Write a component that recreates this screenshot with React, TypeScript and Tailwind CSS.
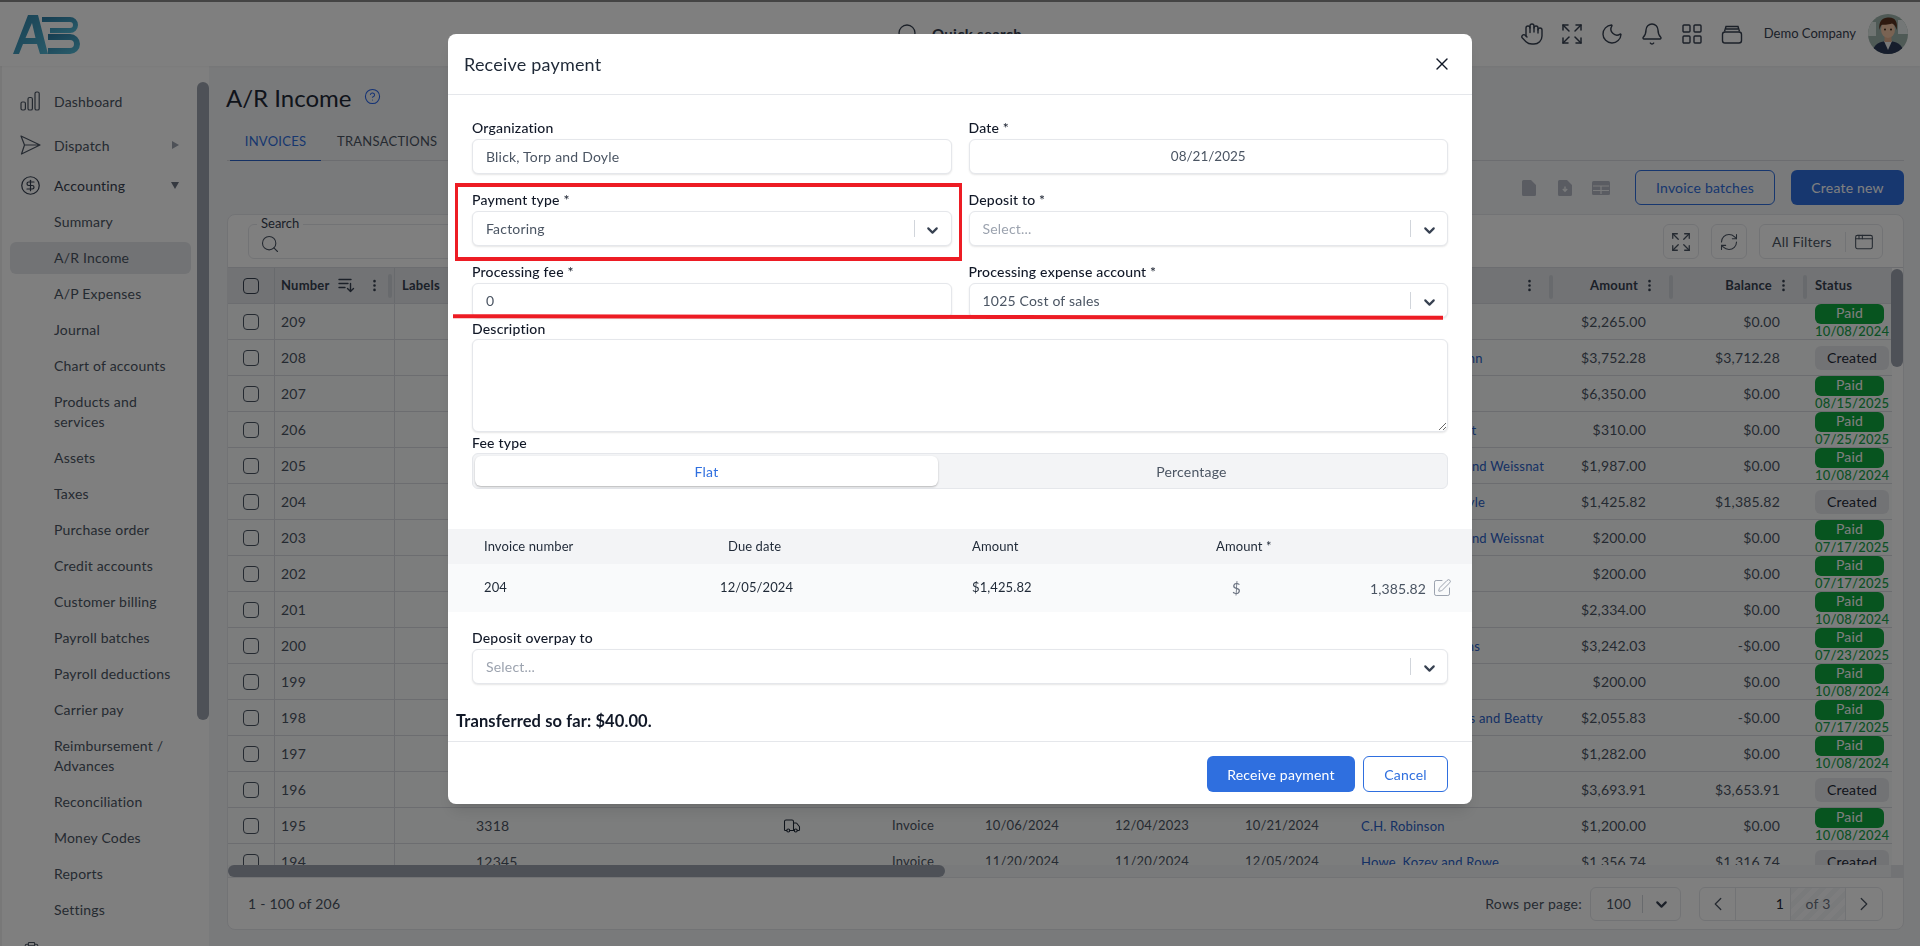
import React from "react";
import { Hand, Expand, Moon, Bell, LayoutGrid, CircleDollarSign, CircleHelp, Search, RefreshCw, ChevronDown, ChevronLeft, ChevronRight, X, EllipsisVertical, AppWindow, SquarePen, Truck, ClipboardList } from "lucide-react";

const sideTop = [
  { t: "Summary" }, { t: "A/R Income", active: true }, { t: "A/P Expenses" }, { t: "Journal" }, { t: "Chart of accounts" },
  { t: "Products and services", two: true }, { t: "Assets" }, { t: "Taxes" }, { t: "Purchase order" }, { t: "Credit accounts" },
  { t: "Customer billing" }, { t: "Payroll batches" }, { t: "Payroll deductions" }, { t: "Carrier pay" },
  { t: "Reimbursement / Advances", two: true }, { t: "Reconciliation" }, { t: "Money Codes" }, { t: "Reports" }, { t: "Settings" },
];

type Row = { n: string; load?: string; truck?: boolean; type?: string; d1?: string; d2?: string; d3?: string; cust?: string; amt: string; bal: string; paid?: string };
const rows: Row[] = [
  { n: "209", amt: "$2,265.00", bal: "$0.00", paid: "10/08/2024" },
  { n: "208", cust: "Daugherty-Hermann", amt: "$3,752.28", bal: "$3,712.28" },
  { n: "207", amt: "$6,350.00", bal: "$0.00", paid: "08/15/2025" },
  { n: "206", cust: "Bednar and Schmitt", amt: "$310.00", bal: "$0.00", paid: "07/25/2025" },
  { n: "205", cust: "Gleichner, Hagen and Weissnat", amt: "$1,987.00", bal: "$0.00", paid: "10/08/2024" },
  { n: "204", cust: "Blick, Torp and Doyle", amt: "$1,425.82", bal: "$1,385.82" },
  { n: "203", cust: "Gleichner, Hagen and Weissnat", amt: "$200.00", bal: "$0.00", paid: "07/17/2025" },
  { n: "202", cust: "Rempel and Kelley", amt: "$200.00", bal: "$0.00", paid: "07/17/2025" },
  { n: "201", cust: "Rempel and Kelley", amt: "$2,334.00", bal: "$0.00", paid: "10/08/2024" },
  { n: "200", cust: "Kshlerin and Simons", amt: "$3,242.03", bal: "-$0.00", paid: "07/23/2025" },
  { n: "199", amt: "$200.00", bal: "$0.00", paid: "10/08/2024" },
  { n: "198", cust: "Schroeder, Hopkins and Beatty", amt: "$2,055.83", bal: "-$0.00", paid: "07/17/2025" },
  { n: "197", amt: "$1,282.00", bal: "$0.00", paid: "10/08/2024" },
  { n: "196", amt: "$3,693.91", bal: "$3,653.91" },
  { n: "195", load: "3318", truck: true, type: "Invoice", d1: "10/06/2024", d2: "12/04/2023", d3: "10/21/2024", cust: "C.H. Robinson", amt: "$1,200.00", bal: "$0.00", paid: "10/08/2024" },
  { n: "194", load: "12345", type: "Invoice", d1: "11/20/2024", d2: "11/20/2024", d3: "12/05/2024", cust: "Howe, Kozey and Rowe", amt: "$1,356.74", bal: "$1,316.74" },
];

function Logo() {
  return (
    <svg width="68" height="41" viewBox="0 0 68 41" fill="none">
      <defs>
        <linearGradient id="lg" x1="0" y1="0" x2="1" y2="1">
          <stop offset="0" stopColor="#2f7fa6" />
          <stop offset="1" stopColor="#52b6d3" />
        </linearGradient>
      </defs>
      <path d="M1 40 L16 1 H26 L36 40 H28 L25 30 H11 L7 40 Z M13.500 24 H23.500 L20 9 Z" fill="url(#lg)" fillRule="evenodd" />
      <path d="M30 5.500 H58 A5.500 5.500 0 0 1 58 16.500 H38" stroke="url(#lg)" strokeWidth="5" />
      <path d="M36 23 H58 A7 7 0 0 1 58 37 H36" stroke="url(#lg)" strokeWidth="6" />
    </svg>
  );
}

function Avatar() {
  return (
    <svg width="40" height="40" viewBox="0 0 40 40" className="rounded-full">
      <rect width="40" height="40" fill="#9fb4ad" />
      <rect x="0" y="8" width="8" height="14" fill="#dfe8e4" />
      <rect x="30" y="6" width="10" height="14" fill="#e8eeee" />
      <path d="M4 40 C5 30 12 27 20 27 C28 27 35 30 36 40 Z" fill="#2c3a58" />
      <path d="M16 27 L20 36 L24 27 Z" fill="#f2f2f2" />
      <rect x="16.500" y="21" width="7" height="7" fill="#e4b08e" />
      <ellipse cx="20" cy="15.500" rx="7" ry="8.500" fill="#f2c6a6" />
      <path d="M11.500 16 C10 6 16 3 21 3.500 C28 3.500 30 9 28.500 16 C27.500 12 26 10 24 9.500 C20 11 15 10.500 13.500 11 C12.500 12 12 14 11.500 16 Z" fill="#5a3320" />
      <circle cx="17" cy="15.500" r="0.9" fill="#2a1a10" />
      <circle cx="23" cy="15.500" r="0.9" fill="#2a1a10" />
    </svg>
  );
}

function BarsIcon() {
  return (
    <svg width="20" height="20" viewBox="0 0 20 20" fill="none" stroke="currentColor" strokeWidth="1.2">
      <rect x="1" y="11" width="4.400" height="8" rx="1.400" />
      <rect x="8" y="6.500" width="4.400" height="12.500" rx="1.600" />
      <rect x="15" y="1" width="4.200" height="18" rx="1.600" />
    </svg>
  );
}

function PlaneIcon() {
  return (
    <svg width="21" height="20" viewBox="0 0 21 20" fill="none" stroke="currentColor" strokeWidth="1.2" strokeLinejoin="round">
      <path d="M1 1 L20 10 L1.500 19 L4.500 10 Z M4.500 10 H20" />
    </svg>
  );
}

function CardsIcon() {
  return (
    <svg width="24" height="24" viewBox="0 0 24 24" fill="none" stroke="currentColor" strokeWidth="1.4">
      <rect x="2.500" y="10" width="19" height="11" rx="2.500" />
      <path d="M4.500 9.500 L6 4.500 H18 L19.500 9.500 M6 7 H18" />
    </svg>
  );
}

function SortIcon() {
  return (
    <svg width="17" height="15" viewBox="0 0 17 15" fill="none" stroke="currentColor" strokeWidth="1.4" strokeLinecap="round" strokeLinejoin="round">
      <path d="M1 1.500 H13 M1 5.500 H10 M1 9.500 H7 M12.500 5.500 V13.500 M9.500 10.500 L12.500 13.500 L15.500 10.500" />
    </svg>
  );
}

function FileSolid({ arrow }: { arrow?: boolean }) {
  return (
    <svg width="14" height="16" viewBox="0 0 14 16">
      <path d="M1.500 0 H9 L14 5 V14.500 A1.500 1.500 0 0 1 12.500 16 H1.500 A1.500 1.500 0 0 1 0 14.500 V1.500 A1.500 1.500 0 0 1 1.500 0 Z" fill="#b4b9c5" />
      {arrow && <path d="M7 6.500 V11 M4.800 9 L7 11.200 L9.200 9" stroke="#f3f4f6" strokeWidth="1.400" fill="none" />}
    </svg>
  );
}

function SideItem({ t, active, two }: { t: string; active?: boolean; two?: boolean }) {
  return (
    <div className={`${two ? "h-[56px]" : "h-[36px]"} flex items-center pl-[8px] pr-[18px]`}>
      <div className={`${active ? "bg-[#e5e7eb] h-[32px]" : ""} w-full rounded-md flex items-center pl-[44px] pr-2 text-[#4b5563] text-[14px] leading-[20px] tracking-[0.2px]`}>{t}</div>
    </div>
  );
}

function HeadCell({ w, label, right }: { w: string; label?: string; right?: boolean }) {
  return (
    <div className={`${w} shrink-0 h-full flex items-center relative text-[13px] font-bold text-[#374151] tracking-[0.2px]`}>
      {right ? (
        <div className="flex items-center justify-end w-full pr-[14px] gap-[4px]">
          <span>{label}</span>
          <EllipsisVertical size={15} strokeWidth={2.2} className="text-[#374151]" />
        </div>
      ) : (
        <span className="pl-[7px]">{label}</span>
      )}
      {right && <span className="absolute right-[-2px] top-[7px] w-[4px] h-[24px] rounded-sm bg-[#d1d5db]" />}
    </div>
  );
}

function Select({ value, placeholder }: { value?: string; placeholder?: boolean }) {
  return (
    <div className="h-[35px] bg-white border border-[#e5e7eb] shadow-[0_1px_2px_rgba(0,0,0,0.1)] rounded-md flex items-center pl-[13px] text-[14px] tracking-[0.2px]">
      <span className={`flex-1 pb-[1px] ${placeholder ? "text-[#9ca3af]" : "text-[#4b5563]"}`}>{value}</span>
      <span className="w-px h-[17px] bg-[#d1d5db]" />
      <span className="w-[36px] flex justify-center pt-[3px]">
        <ChevronDown size={17} strokeWidth={3} className="text-[#374151]" />
      </span>
    </div>
  );
}

function Field({ label, children }: { label: string; children: React.ReactNode }) {
  return (
    <div className="flex flex-col">
      <label className="h-[22px] pb-[1px] flex items-center text-[14px] text-[#111827] font-medium tracking-[0.2px]">{label}</label>
      {children}
    </div>
  );
}

function TextBox({ value, center }: { value: string; center?: boolean }) {
  return (
    <div className={`h-[35px] bg-white border border-[#e5e7eb] shadow-[0_1px_2px_rgba(0,0,0,0.1)] rounded-md flex items-center px-[13px] pb-[1px] text-[#4b5563] ${center ? "justify-center text-[13.5px]" : "text-[14px] tracking-[0.2px]"}`}>
      {value}
    </div>
  );
}

export default function App() {
  return (
    <div className="relative w-screen h-screen overflow-hidden bg-[#f3f4f6] font-[Lato,sans-serif] flex flex-col">
      <div className="h-[2px] shrink-0 bg-[#888888]" />
      <header className="h-[64px] shrink-0 bg-white flex items-center shadow-[0_1px_2px_rgba(0,0,0,0.04)] z-10">
        <div className="w-[896px] pl-[12px] pt-[1px] shrink-0"><Logo /></div>
        <div className="flex items-center gap-[12px] text-[#374151] text-[15px] font-bold tracking-[0.3px]">
          <Search size={24} strokeWidth={1.3} />
          <span>Quick search</span>
        </div>
        <div className="ml-auto flex items-center pr-[12px] text-[#374151]">
          <div className="flex items-center gap-[16px] mr-[20px]">
            <Hand size={24} strokeWidth={1.4} />
            <Expand size={24} strokeWidth={1.5} />
            <Moon size={24} strokeWidth={1.4} />
            <Bell size={24} strokeWidth={1.4} />
            <LayoutGrid size={24} strokeWidth={1.4} />
            <CardsIcon />
          </div>
          <span className="text-[13px] mr-[12px]">Demo Company</span>
          <Avatar />
        </div>
      </header>

      <div className="flex-1 flex min-h-0">
        <aside className="relative w-[209px] shrink-0 bg-white border-l-2 border-[#f0f0f0] pt-[13px] overflow-hidden">
          <div className="h-[44px] flex items-center pl-[18px] text-[#4b5563]">
            <BarsIcon />
            <span className="ml-[14px] text-[14px] tracking-[0.2px]">Dashboard</span>
          </div>
          <div className="h-[44px] flex items-center pl-[18px] text-[#4b5563]">
            <PlaneIcon />
            <span className="ml-[13px] text-[14px] tracking-[0.2px]">Dispatch</span>
            <span className="ml-auto mr-[30px] w-0 h-0 border-y-[4px] border-y-transparent border-l-[7px] border-l-[#9ca3af]" />
          </div>
          <div className="h-[37px] flex items-center pl-[18px] text-[#374151]">
            <CircleDollarSign size={21} strokeWidth={1.4} />
            <span className="ml-[13px] text-[14px] tracking-[0.2px]">Accounting</span>
            <span className="ml-auto mr-[30px] w-0 h-0 border-x-[4px] border-x-transparent border-t-[7px] border-t-[#6b7280]" />
          </div>
          {sideTop.map((s) => (
            <SideItem key={s.t} t={s.t} active={s.active} two={s.two} />
          ))}
          <div className="h-[44px] flex items-center pl-[20px] text-[#4b5563]">
            <ClipboardList size={19} strokeWidth={1.3} />
            <span className="ml-[12px] text-[14px]">Tasks</span>
          </div>
          <div className="absolute right-0 top-[16px] w-[12px] h-[638px] rounded-full bg-[#9ca3af]" />
        </aside>

        <main className="flex-1 min-w-0 pl-[18px] pr-[16px] flex flex-col">
          <div className="h-[57px] shrink-0 flex items-center gap-[13px] pt-[7px]">
            <h1 className="text-[24px] font-normal text-[#1f2937] leading-none -ml-px">A/R Income</h1>
            <CircleHelp size={17} strokeWidth={1.5} className="text-[#2563eb] -mt-[4px]" />
          </div>
          <div className="h-[38px] shrink-0 flex border-b border-[#d9dbe0] text-[13px] tracking-[0.25px] pl-[3px]">
            <div className="h-[38px] w-[91px] flex items-center justify-center border-b-[1.5px] border-[#2a62c9] text-[#2f6fdf]">INVOICES</div>
            <div className="h-[37px] flex items-center pl-[16px] text-[#4b5563]">TRANSACTIONS</div>
          </div>
          <div className="h-[35px] mt-[9px] shrink-0 flex items-center justify-end">
            <span className="mr-[22px] flex"><FileSolid /></span>
            <span className="mr-[20px] flex"><FileSolid arrow /></span>
            <svg width="18" height="14" viewBox="0 0 18 14" className="mr-[25px]" fill="none">
              <rect x="0" y="0" width="18" height="14" rx="1.500" fill="#b4b9c5" />
              <path d="M1 5 H17 M1 9.500 H17 M9 5 V13" stroke="#f3f4f6" strokeWidth="1.200" />
            </svg>
            <div className="w-[140px] h-[35px] rounded-md border border-[#2f6fdf] text-[#2f6fdf] text-[14px] flex items-center justify-center tracking-[0.2px]">Invoice batches</div>
            <div className="w-[113px] h-[35px] ml-[16px] rounded-md bg-[#2f6fdf] text-white text-[14px] flex items-center justify-center tracking-[0.2px]">Create new</div>
          </div>

          <section className="mt-[9px] h-[716px] shrink-0 rounded-lg border border-[#e5e7eb] bg-white overflow-hidden flex flex-col">
            <div className="h-[52px] shrink-0 flex items-center pl-[20px] pr-[20px] pt-[1px]">
              <div className="relative w-[800px] h-[35px] rounded-md border border-[#e5e7eb] flex items-center pl-[11px]">
                <span className="absolute left-[8px] -top-[10px] bg-white px-[4px] text-[13px] text-[#374151] leading-[16px]">Search</span>
                <Search size={20} strokeWidth={1.3} className="text-[#4b5563] mt-[5px]" />
              </div>
              <div className="ml-auto w-[36px] h-[35px] rounded-md border border-[#e5e7eb] flex items-center justify-center text-[#4b5563]"><Expand size={22} strokeWidth={1.4} /></div>
              <div className="ml-[12px] w-[36px] h-[35px] rounded-md border border-[#e5e7eb] flex items-center justify-center text-[#4b5563]"><RefreshCw size={20} strokeWidth={1.3} /></div>
              <div className="ml-[12px] w-[124px] h-[35px] rounded-md border border-[#e5e7eb] flex items-center pl-[12px] text-[#4b5563] text-[14px]">
                <span className="tracking-[0.2px]">All Filters</span>
                <span className="w-px h-[20px] bg-[#e5e7eb] ml-[13px]" />
                <AppWindow size={20} strokeWidth={1.3} className="ml-[8px]" />
              </div>
            </div>

            <div className="relative h-[598px] shrink-0 overflow-hidden border-t border-[#d9dbe0]">
              <div className="w-[1664px]">
                <div className="h-[35px] flex bg-[#e5e7eb]">
                  <div className="w-[47px] shrink-0 flex items-center justify-center border-r border-[#d1d5db]">
                    <span className="w-[16px] h-[16px] rounded-[4px] border border-[#374151]" />
                  </div>
                  <div className="w-[120px] shrink-0 h-full flex items-center relative text-[13px] font-bold text-[#374151] tracking-[0.2px] pl-[6px] border-r border-[#d1d5db]">
                    <span>Number</span>
                    <span className="ml-[9px]"><SortIcon /></span>
                    <EllipsisVertical size={15} strokeWidth={2.2} className="ml-[12px]" />
                    <span className="absolute right-[2px] top-[6px] w-[4px] h-[24px] rounded-sm bg-[#d1d5db]" />
                  </div>
                  <HeadCell w="w-[71px]" label="Labels" />
                  <HeadCell w="w-[305px]" />
                  <HeadCell w="w-[111px]" />
                  <HeadCell w="w-[93px]" />
                  <HeadCell w="w-[130px]" />
                  <HeadCell w="w-[130px]" />
                  <HeadCell w="w-[116px]" />
                  <HeadCell w="w-[200px]" right />
                  <HeadCell w="w-[120px]" label="Amount" right />
                  <HeadCell w="w-[134px]" label="Balance" right />
                  <div className="w-[87px] shrink-0 flex items-center pl-[10px] text-[13px] font-bold text-[#374151] tracking-[0.2px]">Status</div>
                </div>
                {rows.map((r) => (
                  <div key={r.n} className="h-[36px] flex border-t border-[#d9dbe0] text-[14px] text-[#4b5563] bg-[#f9fafb] tracking-[0.2px]">
                    <div className="w-[47px] shrink-0 flex items-center justify-center border-r border-[#d9dbe0]">
                      <span className="w-[16px] h-[16px] rounded-[4px] border border-[#4b5563]" />
                    </div>
                    <div className="w-[120px] shrink-0 flex items-center pl-[6px] border-r border-[#d9dbe0]">{r.n}</div>
                    <div className="w-[71px] shrink-0" />
                    <div className="w-[305px] shrink-0 flex items-center pl-[10px]">{r.load}</div>
                    <div className="w-[111px] shrink-0 flex items-center pl-[12px]">{r.truck && <Truck size={18} strokeWidth={1.4} className="text-[#1f2937]" />}</div>
                    <div className="w-[93px] shrink-0 flex items-center pl-[10px] text-[13px]">{r.type}</div>
                    <div className="w-[130px] shrink-0 flex items-center pl-[10px] text-[13px]">{r.d1}</div>
                    <div className="w-[130px] shrink-0 flex items-center pl-[10px] text-[13px]">{r.d2}</div>
                    <div className="w-[116px] shrink-0 flex items-center pl-[10px] text-[13px]">{r.d3}</div>
                    <div className="w-[200px] shrink-0 flex items-center pl-[10px] pt-[3px] text-[13px] text-[#2a62c9] whitespace-nowrap">{r.cust}</div>
                    <div className="w-[120px] shrink-0 flex items-center justify-end pr-[25px]">{r.amt}</div>
                    <div className="w-[134px] shrink-0 flex items-center justify-end pr-[25px]">{r.bal}</div>
                    <div className="w-[87px] shrink-0 pl-[10px] flex flex-col justify-center">
                      {r.paid ? (
                        <>
                          <span className="w-[69px] h-[20px] rounded-md bg-[#0fa83e] text-white text-[14px] leading-[18px] text-center shrink-0">Paid</span>
                          <span className="text-[13px] leading-[15px] text-[#16a34a] font-medium whitespace-nowrap">{r.paid}</span>
                        </>
                      ) : (
                        <span className="w-[74px] h-[24px] rounded-md bg-[#e5e7eb] text-[#1f2937] text-[14px] flex items-center justify-center">Created</span>
                      )}
                    </div>
                  </div>
                ))}
              </div>
              <div className="absolute right-0 top-[1px] w-[12px] h-[98px] rounded-full bg-[#9ca3af]" />
            </div>

            <div className="h-[12px] shrink-0 bg-[#f3f4f6] flex">
              <div className="w-[717px] h-[12px] rounded-full bg-[#9ca3af]" />
              <div className="ml-auto w-[12px] bg-[#e5e7eb]" />
            </div>

            <div className="h-[52px] shrink-0 flex items-center pl-[20px] pr-[20px] border-t border-[#e5e7eb] text-[14px] text-[#4b5563] tracking-[0.25px]">
              <span>1 - 100 of 206</span>
              <span className="ml-auto">Rows per page:</span>
              <div className="ml-[8px] w-[91px] h-[34px] rounded-md border border-[#e5e7eb] flex items-center">
                <span className="flex-1 pl-[15px]">100</span>
                <span className="w-px h-[18px] bg-[#d1d5db]" />
                <span className="w-[37px] flex justify-center pt-[2px]"><ChevronDown size={17} strokeWidth={3} className="text-[#374151]" /></span>
              </div>
              <div className="ml-[18px] w-[184px] h-[34px] rounded-md border border-[#e5e7eb] flex items-center">
                <span className="w-[36px] h-full flex items-center justify-center border-r border-[#e5e7eb]"><ChevronLeft size={22} strokeWidth={1.4} /></span>
                <span className="w-[55px] h-full flex items-center justify-end pr-[6px] border-r border-[#e5e7eb] text-[#1f2937]">1</span>
                <span className="w-[55px] h-full flex items-center justify-center border-r border-[#e5e7eb] text-[#6b7280] bg-[repeating-linear-gradient(135deg,#f3f4f6_0,#f3f4f6_5px,#fbfbfc_5px,#fbfbfc_10px)]">of 3</span>
                <span className="flex-1 h-full flex items-center justify-center"><ChevronRight size={22} strokeWidth={1.4} /></span>
              </div>
            </div>
          </section>
        </main>
      </div>

      <div className="fixed inset-0 bg-black/50 z-20" />

      <div className="fixed left-[448px] top-[34px] w-[1024px] h-[770px] z-30 bg-white rounded-lg flex flex-col shadow-lg">
        <div className="h-[61px] shrink-0 flex items-center justify-between pl-[16px] pr-[20px] border-b border-[#e5e7eb]">
          <h2 className="text-[18px] font-normal text-[#1f2937] tracking-[0.2px]">Receive payment</h2>
          <X size={20} strokeWidth={1.6} className="text-[#111827]" />
        </div>

        <div className="flex-1 flex flex-col pt-[22px]">
          <div className="px-[24px]">
            <div className="grid grid-cols-2 gap-x-[17px] gap-y-[15px]">
              <Field label="Organization"><TextBox value="Blick, Torp and Doyle" /></Field>
              <Field label="Date *"><TextBox value="08/21/2025" center /></Field>
              <Field label="Payment type *"><Select value="Factoring" /></Field>
              <Field label="Deposit to *"><Select value="Select..." placeholder /></Field>
              <Field label="Processing fee *"><TextBox value="0" /></Field>
              <Field label="Processing expense account *"><Select value="1025 Cost of sales" /></Field>
            </div>
            <label className="h-[21px] flex items-center text-[14px] text-[#111827] font-medium tracking-[0.2px]">Description</label>
            <textarea readOnly className="block w-full h-[93px] bg-white border border-[#e5e7eb] shadow-[0_1px_2px_rgba(0,0,0,0.1)] rounded-md outline-none" />
            <label className="h-[21px] flex items-center text-[14px] text-[#111827] font-medium tracking-[0.2px]">Fee type</label>
            <div className="h-[36px] flex bg-[#f3f4f6] border border-[#e5e7eb] rounded-md p-[2px] text-[14px] tracking-[0.2px]">
              <div className="w-[463px] bg-white rounded-md shadow-[0_1px_2px_rgba(0,0,0,0.25)] flex items-center justify-center text-[#2f6fdf]">Flat</div>
              <div className="flex-1 flex items-center justify-center text-[#4b5563]">Percentage</div>
            </div>
          </div>

          <div className="mt-[40px] h-[35px] shrink-0 bg-[#f3f4f6] grid grid-cols-[244px_244px_244px_1fr] items-center pl-[36px] text-[13px] text-[#1f2937] tracking-[0.1px]">
            <span>Invoice number</span>
            <span>Due date</span>
            <span>Amount</span>
            <span>Amount *</span>
          </div>
          <div className="h-[48px] shrink-0 bg-[#f9fafb] grid grid-cols-[236px_252px_244px_1fr] items-center pl-[36px] text-[13px] text-[#1f2937] tracking-[0.1px]">
            <span>204</span>
            <span>12/05/2024</span>
            <span>$1,425.82</span>
            <div className="flex items-center pr-[20px] text-[#4b5563]">
              <span className="ml-[16px] text-[15px] text-[#6b7280]">$</span>
              <span className="ml-auto text-[14px]">1,385.82</span>
              <SquarePen size={20} strokeWidth={1.2} className="ml-[6px] text-[#9ca3af]" />
            </div>
          </div>

          <div className="px-[24px] mt-[15px]">
            <Field label="Deposit overpay to"><Select value="Select..." placeholder /></Field>
          </div>

          <div className="pl-[8px] mt-[26px] h-[22px] flex items-center text-[16.5px] font-bold text-[#111827] tracking-[0.1px]">Transferred so far: $40.00.</div>

          <div className="mt-[9px] border-t border-[#e5e7eb] h-[64px] flex items-start justify-end pt-[14px] pr-[24px] gap-[8px] text-[14px] tracking-[0.2px]">
            <div className="w-[148px] h-[36px] rounded-md bg-[#2f6fdf] text-white flex items-center justify-center">Receive payment</div>
            <div className="w-[85px] h-[36px] rounded-md border border-[#2f6fdf] text-[#2f6fdf] flex items-center justify-center">Cancel</div>
          </div>
        </div>
      </div>

      <div className="fixed left-[455px] top-[183px] w-[507px] h-[78px] z-40 border-x-[3px] border-y-[4px] border-[#ed1c24]" />
      <div className="fixed left-[453px] top-[315px] w-[990px] h-[4px] z-40 bg-[#ed1c24] rotate-[0.1deg]" />
    </div>
  );
}
